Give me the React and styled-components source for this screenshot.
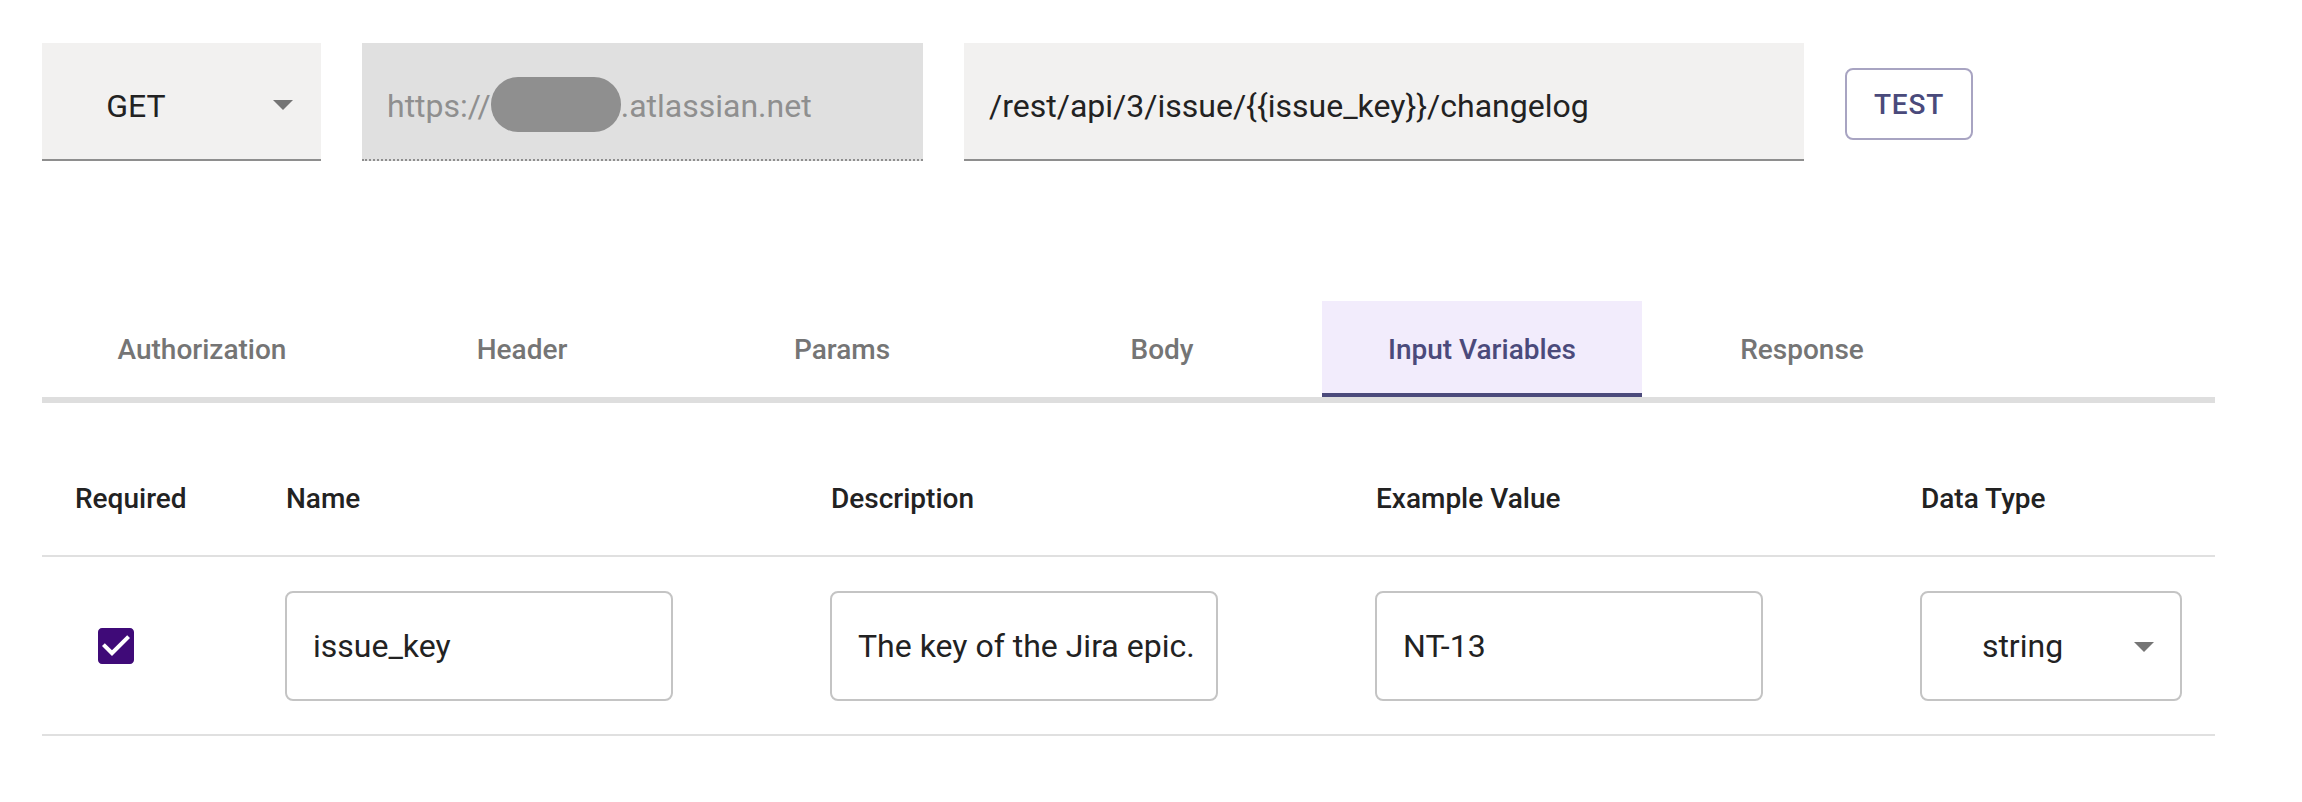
import React from "react";
import styled, { createGlobalStyle } from "styled-components";

const Global = createGlobalStyle`
  html, body { margin: 0; padding: 0; background: #fff; }
  body { font-family: Roboto, "Noto Sans", "Liberation Sans", sans-serif; }
  * { box-sizing: border-box; }
`;

const Page = styled.div`
  padding: 43px 87px 0 42px;
  width: 2302px;
  height: 802px;
  overflow: hidden;
`;

const TopRow = styled.div`
  display: flex;
  align-items: flex-start;
  gap: 41px;
`;

const FieldBox = styled.div`
  height: 118px;
  width: ${(p) => p.$w}px;
  background: ${(p) => (p.$disabled ? "#e0e0e0" : "#f2f1f0")};
  border-bottom: 2px ${(p) => (p.$disabled ? "dotted" : "solid")} #8e8e8e;
  display: flex;
  align-items: center;
  padding: 10px 24px 0 25px;
  font-size: 32px;
  color: ${(p) => (p.$disabled ? "#8f8f8f" : "#222")};
  position: relative;
  white-space: nowrap;
`;

const SelectValue = styled.span`
  flex: 1;
  text-align: center;
  padding-right: ${(p) => p.$pr || 40}px;
`;

const Caret = styled.span`
  width: 0;
  height: 0;
  border-left: 10px solid transparent;
  border-right: 10px solid transparent;
  border-top: 10px solid #757575;
  position: absolute;
  right: ${(p) => p.$right}px;
  top: 50%;
  margin-top: ${(p) => p.$mt || -1}px;
`;

const Redacted = styled.span`
  display: inline-block;
  width: 130px;
  height: 55px;
  border-radius: 27px;
  background: #8f8f8f;
  vertical-align: middle;
  margin-top: -4px;
`;

const TestButton = styled.button`
  margin-top: 25px;
  width: 128px;
  height: 72px;
  border: 2px solid #a8a4c2;
  border-radius: 8px;
  background: #fff;
  color: #4a4a7b;
  font-family: inherit;
  font-weight: 500;
  font-size: 28px;
  letter-spacing: 0.8px;
  cursor: pointer;
`;

const Tabs = styled.div`
  margin-top: 140px;
  display: flex;
  border-bottom: 6px solid #dedede;
  width: 2173px;
`;

const Tab = styled.div`
  width: 320px;
  height: 96px;
  display: flex;
  align-items: center;
  justify-content: center;
  font-size: 28px;
  font-weight: 500;
  color: ${(p) => (p.$active ? "#4b4a7b" : "#757575")};
  background: ${(p) => (p.$active ? "#f2ecfc" : "transparent")};
  border-bottom: 4px solid ${(p) => (p.$active ? "#4b4a7b" : "transparent")};
  padding-top: 4px;
`;

const Table = styled.div`
  margin-top: 38px;
  width: 2173px;
`;

const Row = styled.div`
  display: grid;
  grid-template-columns: 211px 545px 545px 545px 1fr;
  align-items: center;
  border-bottom: 2px solid #e0e0e0;
  height: ${(p) => p.$h}px;
`;

const HeadCell = styled.div`
  padding-left: 33px;
  font-size: 28px;
  font-weight: 500;
  color: #222;
`;

const Cell = styled.div`
  padding-left: 32px;
  display: flex;
  align-items: center;
`;

const CheckboxIcon = styled.svg`
  margin-left: 18px;
  width: 48px;
  height: 48px;
  display: block;
`;

const Input = styled.div`
  width: ${(p) => p.$w || 388}px;
  height: 110px;
  border: 2px solid #c4c4c4;
  border-radius: 8px;
  display: flex;
  align-items: center;
  padding-left: 26px;
  font-size: 32px;
  color: #222;
  position: relative;
  white-space: nowrap;
  overflow: hidden;
`;

const tabs = ["Authorization", "Header", "Params", "Body", "Input Variables", "Response"];

export default function App() {
  return (
    <>
      <Global />
      <Page>
        <TopRow>
          <FieldBox $w={279}>
            <SelectValue $pr={92}>GET</SelectValue>
            <Caret $right={28} $mt={0} />
          </FieldBox>
          <FieldBox $w={561} $disabled>
            <span>https://</span>
            <Redacted />
            <span>.atlassian.net</span>
          </FieldBox>
          <FieldBox $w={840}>/rest/api/3/issue/{"{{issue_key}}"}/changelog</FieldBox>
          <TestButton>TEST</TestButton>
        </TopRow>

        <Tabs>
          {tabs.map((t) => (
            <Tab key={t} $active={t === "Input Variables"}>
              {t}
            </Tab>
          ))}
        </Tabs>

        <Table>
          <Row $h={116}>
            <HeadCell>Required</HeadCell>
            <HeadCell>Name</HeadCell>
            <HeadCell>Description</HeadCell>
            <HeadCell>Example Value</HeadCell>
            <HeadCell>Data Type</HeadCell>
          </Row>
          <Row $h={179}>
            <Cell>
              <CheckboxIcon viewBox="0 0 24 24">
                <path
                  fill="#3f0a78"
                  d="M19 3H5c-1.11 0-2 .9-2 2v14c0 1.1.89 2 2 2h14c1.11 0 2-.9 2-2V5c0-1.1-.89-2-2-2zm-9 14l-5-5 1.41-1.41L10 14.17l7.59-7.59L19 8l-9 9z"
                />
              </CheckboxIcon>
            </Cell>
            <Cell>
              <Input>issue_key</Input>
            </Cell>
            <Cell>
              <Input>The key of the Jira epic.</Input>
            </Cell>
            <Cell>
              <Input>NT-13</Input>
            </Cell>
            <Cell>
              <Input $w={262}>
                <SelectValue $pr={83}>string</SelectValue>
                <Caret $right={26} $mt={-4} />
              </Input>
            </Cell>
          </Row>
        </Table>
      </Page>
    </>
  );
}
